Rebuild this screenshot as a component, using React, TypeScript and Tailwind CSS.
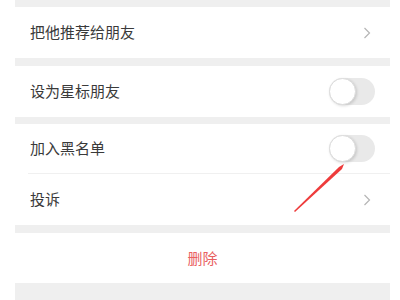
import React from 'react';

const font = { fontFamily: '"Noto Sans CJK SC", "Noto Sans", sans-serif' };

const Chevron: React.FC = () => (
    <svg width="8" height="12" viewBox="0 0 8 12" className="mr-[4px]">
        <path d="M1.5 1 L6.5 6 L1.5 11" fill="none" stroke="#b5b5b5" strokeWidth="1.2" />
    </svg>
);

const Toggle: React.FC = () => (
    <div className="relative w-[46px] h-[27px] rounded-full bg-[#e9e9e9]">
        <div className="absolute left-0 top-0 w-[27px] h-[27px] rounded-full bg-white border border-[#dcdcdc] shadow-[1px_1px_3px_rgba(0,0,0,0.15)]" />
    </div>
);

const Row: React.FC<{ label: string; height: string; right: React.ReactNode }> = ({ label, height, right }) => (
    <div className={`flex items-center justify-between bg-white pl-[15px] pr-[15px] ${height}`}>
        <span className="text-[15px] text-[#3a3a3a]">{label}</span>
        {right}
    </div>
);

const App: React.FC = () => {
    return (
        <div className="relative w-[400px] h-[300px] bg-white pl-[15px] pr-[10px] overflow-hidden" style={font}>
            <div className="flex flex-col h-full bg-[#efefef]">
                <div className="h-[7px]" />
                <Row label="把他推荐给朋友" height="h-[51px]" right={<Chevron />} />
                <div className="h-[8px]" />
                <Row label="设为星标朋友" height="h-[51px]" right={<Toggle />} />
                <div className="h-[7px]" />
                <Row label="加入黑名单" height="h-[49px]" right={<Toggle />} />
                <div className="bg-white pl-[13px]">
                    <div className="h-px bg-[#f0f0f0]" />
                </div>
                <Row label="投诉" height="h-[51px]" right={<Chevron />} />
                <div className="h-[8px]" />
                <div className="flex items-center justify-center h-[50px] bg-white">
                    <span className="text-[15px] text-[#e96060]">删除</span>
                </div>
            </div>
            {/* red annotation arrow */}
            <svg className="absolute left-0 top-0" width="400" height="300" viewBox="0 0 400 300">
                <polygon points="294,211 339,167 344,164 342,169 295,212" fill="#ee3b3b" />
            </svg>
        </div>
    );
};

export default App;
